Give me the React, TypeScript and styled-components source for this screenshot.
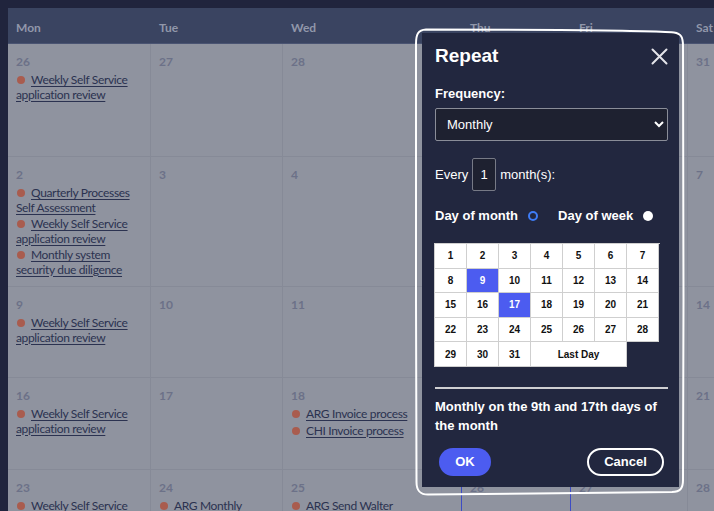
import styled, { createGlobalStyle } from "styled-components";

const GlobalStyle = createGlobalStyle`
  html, body {
    margin: 0;
    background: #20243d;
  }
  body {
    overflow: hidden;
  }
`;

const Page = styled.div`
  position: relative;
  width: 714px;
  height: 511px;
  overflow: hidden;
  padding: 8px 0 0 8px;
  box-sizing: border-box;
`;

const Calendar = styled.div`
  display: grid;
  grid-template-columns: 143px 132px 179px 109px 117px 140px;
  grid-template-rows: 36px 113px 130px 91px 92px 80px;
  width: 820px;
  background: #8f939f;
  font-family: Lato, "Open Sans", sans-serif;
`;

const HeadCell = styled.div`
  display: flex;
  align-items: center;
  padding: 3px 8px 0;
  background: #3a4461;
  color: #9197aa;
  font-size: 12px;
  font-weight: 700;
  border-bottom: 1px solid #4a5472;
  box-sizing: border-box;
`;

const DayCell = styled.div<{ $marked?: boolean }>`
  box-sizing: border-box;
  padding: 10px 8px 0;
  border-right: 1px solid #868a97;
  border-bottom: 1px solid #868a97;
  border-left: ${(p) => (p.$marked ? "1px solid #3d4cc4" : "none")};
  margin-left: ${(p) => (p.$marked ? "-1px" : "0")};
`;

const DateNum = styled.div`
  font-size: 12px;
  font-weight: 700;
  line-height: 16px;
  color: #6c7188;
`;

const Events = styled.div`
  margin-top: 3px;
  display: flex;
  flex-direction: column;
  gap: 2px;
`;

const Event = styled.div`
  font-size: 12px;
  letter-spacing: -0.35px;
  line-height: 14.5px;
  color: #2b3250;
`;

const Dot = styled.span`
  display: inline-block;
  width: 8px;
  height: 8px;
  border-radius: 50%;
  background: #a95c4e;
  margin: 0 6px 1px 1px;
  vertical-align: middle;
`;

const EventLink = styled.span`
  text-decoration: underline;
  text-underline-offset: 2px;
`;

const Modal = styled.div`
  position: absolute;
  left: 422px;
  top: 33px;
  width: 257px;
  height: 454px;
  box-sizing: border-box;
  padding: 11px 11px 0 13px;
  background: #22273f;
  color: #fff;
  font-family: "Liberation Sans", Arial, sans-serif;
  display: flex;
  flex-direction: column;
`;

const TitleRow = styled.div`
  display: flex;
  align-items: center;
  justify-content: space-between;
  height: 24px;
`;

const Title = styled.h2`
  margin: 0;
  font-size: 19px;
  font-weight: 700;
`;

const CloseButton = styled.button`
  border: 0;
  padding: 0;
  background: none;
  display: flex;
  cursor: pointer;
`;

const Label = styled.div`
  margin-top: 18px;
  font-size: 13px;
  font-weight: 700;
  line-height: 16px;
`;

const Select = styled.select`
  margin-top: 6px;
  height: 33px;
  width: 100%;
  padding: 0 7px;
  background-color: #1e2130;
  color: #fff;
  border: 1px solid #8a8d98;
  border-radius: 2px;
  font-family: "Liberation Sans", Arial, sans-serif;
  font-size: 13px;
  color-scheme: dark;
`;

const EveryRow = styled.div`
  margin-top: 17px;
  display: flex;
  align-items: center;
  gap: 4px;
  font-size: 13px;
`;

const NumberBox = styled.div`
  width: 24px;
  height: 33px;
  box-sizing: border-box;
  display: flex;
  align-items: center;
  justify-content: center;
  background: #1e2130;
  border: 1px solid #777a86;
  border-radius: 2px;
  font-size: 13px;
`;

const RadioRow = styled.div`
  margin-top: 17px;
  display: flex;
  align-items: center;
  gap: 20px;
  white-space: nowrap;
  font-size: 13px;
  font-weight: 700;
  line-height: 16px;
`;

const RadioOption = styled.label`
  display: flex;
  align-items: center;
  gap: 10px;
`;

const Radio = styled.span<{ $checked?: boolean }>`
  display: inline-block;
  width: 10px;
  height: 10px;
  box-sizing: border-box;
  border-radius: 50%;
  background: ${(p) => (p.$checked ? "#22273f" : "#fff")};
  border: ${(p) => (p.$checked ? "2px solid #3e7cf6" : "none")};
`;

const DaysGrid = styled.div`
  margin-top: 19px;
  display: grid;
  grid-template-columns: repeat(7, 32px);
  grid-auto-rows: 24.6px;
  width: 225px;
  margin-left: -1px;
  border-top: 1px solid #cfcfcf;
  border-left: 1px solid #cfcfcf;
`;

const DayBox = styled.div<{ $selected?: boolean; $span?: number }>`
  grid-column: span ${(p) => p.$span ?? 1};
  box-sizing: border-box;
  border-right: 1px solid #cfcfcf;
  border-bottom: 1px solid #cfcfcf;
  display: flex;
  align-items: center;
  justify-content: center;
  font-size: 10px;
  font-weight: 700;
  background: ${(p) => (p.$selected ? "#4c5cf0" : "#fff")};
  color: ${(p) => (p.$selected ? "#fff" : "#111")};
`;

const Divider = styled.hr`
  margin: 20px 0 0;
  border: 0;
  height: 2px;
  background: #cfcfd2;
`;

const Summary = styled.p`
  margin: 8px 0 0;
  font-size: 13px;
  font-weight: 700;
  line-height: 19px;
`;

const Actions = styled.div`
  margin-top: 13px;
  display: flex;
  justify-content: space-between;
  padding: 0 4px;
`;

const Button = styled.button<{ $primary?: boolean }>`
  height: 28px;
  box-sizing: border-box;
  border-radius: 14px;
  font-family: "Liberation Sans", Arial, sans-serif;
  font-size: 13px;
  font-weight: 700;
  color: #fff;
  cursor: pointer;
  width: ${(p) => (p.$primary ? "52px" : "77px")};
  background: ${(p) => (p.$primary ? "#4c5cf0" : "transparent")};
  border: ${(p) => (p.$primary ? "0" : "2px solid #fff")};
`;

const Outline = styled.svg`
  position: absolute;
  left: 0;
  top: 0;
  pointer-events: none;
`;

const days = ["Mon", "Tue", "Wed", "Thu", "Fri", "Sat"];

const weeks: { date: number; events?: string[]; marked?: boolean }[][] = [
  [
    { date: 26, events: ["Weekly Self Service application review"] },
    { date: 27 },
    { date: 28 },
    { date: 29 },
    { date: 30 },
    { date: 31 },
  ],
  [
    {
      date: 2,
      events: [
        "Quarterly Processes Self Assessment",
        "Weekly Self Service application review",
        "Monthly system security due diligence",
      ],
    },
    { date: 3 },
    { date: 4 },
    { date: 5 },
    { date: 6 },
    { date: 7 },
  ],
  [
    { date: 9, events: ["Weekly Self Service application review"] },
    { date: 10 },
    { date: 11 },
    { date: 12 },
    { date: 13 },
    { date: 14 },
  ],
  [
    { date: 16, events: ["Weekly Self Service application review"] },
    { date: 17 },
    { date: 18, events: ["ARG Invoice process", "CHI Invoice process"] },
    { date: 19 },
    { date: 20 },
    { date: 21 },
  ],
  [
    { date: 23, events: ["Weekly Self Service application review"] },
    { date: 24, events: ["ARG Monthly"] },
    { date: 25, events: ["ARG Send Walter"] },
    { date: 26, marked: true },
    { date: 27, marked: true },
    { date: 28 },
  ],
];

const selectedDays = [9, 17];

export default function App() {
  return (
    <>
      <GlobalStyle />
      <Page>
        <Calendar>
          {days.map((d) => (
            <HeadCell key={d}>{d}</HeadCell>
          ))}
          {weeks.map((week, wi) =>
            week.map((cell, ci) => (
              <DayCell key={`${wi}-${ci}`} $marked={cell.marked}>
                <DateNum>{cell.date}</DateNum>
                {cell.events && (
                  <Events>
                    {cell.events.map((ev, ei) => (
                      <Event key={ei}>
                        <Dot />
                        <EventLink>{ev}</EventLink>
                      </Event>
                    ))}
                  </Events>
                )}
              </DayCell>
            ))
          )}
        </Calendar>

        <Modal>
          <TitleRow>
            <Title>Repeat</Title>
            <CloseButton aria-label="Close">
              <svg width="17" height="17" viewBox="0 0 17 17">
                <path d="M1.5 1.5 L15.5 15.5 M15.5 1.5 L1.5 15.5" stroke="#e4e4ea" strokeWidth="2" strokeLinecap="round" />
              </svg>
            </CloseButton>
          </TitleRow>

          <Label>Frequency:</Label>
          <Select defaultValue="monthly">
            <option value="daily">Daily</option>
            <option value="weekly">Weekly</option>
            <option value="monthly">Monthly</option>
            <option value="yearly">Yearly</option>
          </Select>

          <EveryRow>
            <span>Every</span>
            <NumberBox>1</NumberBox>
            <span>month(s):</span>
          </EveryRow>

          <RadioRow>
            <RadioOption>
              Day of month
              <Radio $checked />
            </RadioOption>
            <RadioOption>
              Day of week
              <Radio />
            </RadioOption>
          </RadioRow>

          <DaysGrid>
            {Array.from({ length: 31 }, (_, i) => i + 1).map((n) => (
              <DayBox key={n} $selected={selectedDays.includes(n)}>
                {n}
              </DayBox>
            ))}
            <DayBox $span={3}>Last Day</DayBox>
          </DaysGrid>

          <Divider />
          <Summary>Monthly on the 9th and 17th days of the month</Summary>

          <Actions>
            <Button $primary>OK</Button>
            <Button>Cancel</Button>
          </Actions>
        </Modal>

        <Outline width="714" height="511" viewBox="0 0 714 511">
          <path
            d="M416 44 C416 34 418 30 426 29.5 L560 30 C620 30.5 660 31 674 32.5 C681 33.5 683 37 683 46 L683.5 300 L683 480 C683 489 680 491.5 672 492 C620 493 500 493.5 428 494.5 C420 494.5 416.5 491 416.5 482 L416 300 Z"
            fill="none"
            stroke="#fff"
            strokeWidth="2"
          />
        </Outline>
      </Page>
    </>
  );
}
